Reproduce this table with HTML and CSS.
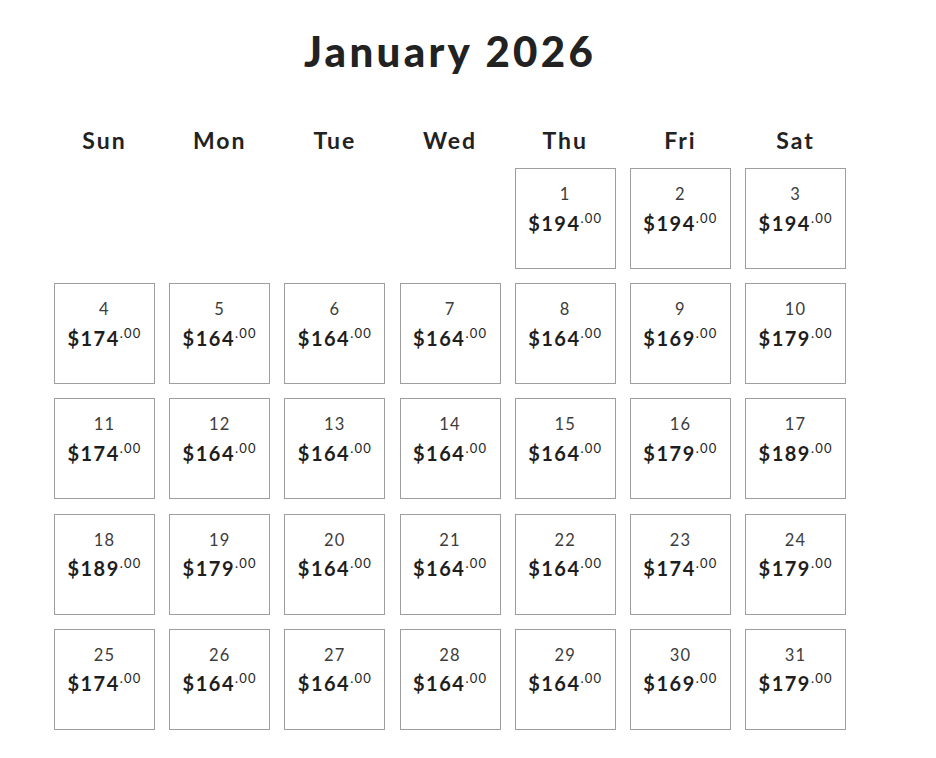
FILE: index.html
```html
<!DOCTYPE html>
<html lang="en">
<head>
<meta charset="utf-8">
<title>January 2026</title>
<link rel="stylesheet" href="styles.css">
</head>
<body>
<div class="calendar">
  <h1 class="title">January 2026</h1>
  <div class="weekdays">
    <div class="wd">Sun</div><div class="wd">Mon</div><div class="wd">Tue</div><div class="wd">Wed</div><div class="wd">Thu</div><div class="wd">Fri</div><div class="wd">Sat</div>
  </div>
  <div class="grid">
    <div class="blank"></div><div class="blank"></div><div class="blank"></div><div class="blank"></div>
    <div class="day"><span class="num">1</span><span class="price">$194<sup>.00</sup></span></div>
    <div class="day"><span class="num">2</span><span class="price">$194<sup>.00</sup></span></div>
    <div class="day"><span class="num">3</span><span class="price">$194<sup>.00</sup></span></div>
    <div class="day"><span class="num">4</span><span class="price">$174<sup>.00</sup></span></div>
    <div class="day"><span class="num">5</span><span class="price">$164<sup>.00</sup></span></div>
    <div class="day"><span class="num">6</span><span class="price">$164<sup>.00</sup></span></div>
    <div class="day"><span class="num">7</span><span class="price">$164<sup>.00</sup></span></div>
    <div class="day"><span class="num">8</span><span class="price">$164<sup>.00</sup></span></div>
    <div class="day"><span class="num">9</span><span class="price">$169<sup>.00</sup></span></div>
    <div class="day"><span class="num">10</span><span class="price">$179<sup>.00</sup></span></div>
    <div class="day"><span class="num">11</span><span class="price">$174<sup>.00</sup></span></div>
    <div class="day"><span class="num">12</span><span class="price">$164<sup>.00</sup></span></div>
    <div class="day"><span class="num">13</span><span class="price">$164<sup>.00</sup></span></div>
    <div class="day"><span class="num">14</span><span class="price">$164<sup>.00</sup></span></div>
    <div class="day"><span class="num">15</span><span class="price">$164<sup>.00</sup></span></div>
    <div class="day"><span class="num">16</span><span class="price">$179<sup>.00</sup></span></div>
    <div class="day"><span class="num">17</span><span class="price">$189<sup>.00</sup></span></div>
    <div class="day"><span class="num">18</span><span class="price">$189<sup>.00</sup></span></div>
    <div class="day"><span class="num">19</span><span class="price">$179<sup>.00</sup></span></div>
    <div class="day"><span class="num">20</span><span class="price">$164<sup>.00</sup></span></div>
    <div class="day"><span class="num">21</span><span class="price">$164<sup>.00</sup></span></div>
    <div class="day"><span class="num">22</span><span class="price">$164<sup>.00</sup></span></div>
    <div class="day"><span class="num">23</span><span class="price">$174<sup>.00</sup></span></div>
    <div class="day"><span class="num">24</span><span class="price">$179<sup>.00</sup></span></div>
    <div class="day"><span class="num">25</span><span class="price">$174<sup>.00</sup></span></div>
    <div class="day"><span class="num">26</span><span class="price">$164<sup>.00</sup></span></div>
    <div class="day"><span class="num">27</span><span class="price">$164<sup>.00</sup></span></div>
    <div class="day"><span class="num">28</span><span class="price">$164<sup>.00</sup></span></div>
    <div class="day"><span class="num">29</span><span class="price">$164<sup>.00</sup></span></div>
    <div class="day"><span class="num">30</span><span class="price">$169<sup>.00</sup></span></div>
    <div class="day"><span class="num">31</span><span class="price">$179<sup>.00</sup></span></div>
  </div>
</div>
</body>
</html>
```

FILE: styles.css
```css
html, body {
  margin: 0;
  padding: 0;
  background: #ffffff;
}
body {
  font-family: Lato, "Noto Sans", sans-serif;
  color: #222222;
}
.calendar {
  width: 792px;
  margin-left: 54px;
  padding-top: 27px;
}
.title {
  margin: 0;
  text-align: center;
  font-size: 42px;
  line-height: 48px;
  font-weight: 900;
  letter-spacing: 3.3px;
  color: #222222;
}
.weekdays {
  display: grid;
  grid-template-columns: repeat(7, 101px);
  column-gap: 14.2px;
  margin-top: 51px;
}
.wd {
  text-align: center;
  font-size: 23px;
  line-height: 28px;
  font-weight: 700;
  letter-spacing: 2px;
  color: #222222;
}
.grid {
  display: grid;
  grid-template-columns: repeat(7, 101px);
  grid-auto-rows: 101px;
  gap: 14.2px;
  margin-top: 14px;
}
.day {
  box-sizing: border-box;
  border: 1px solid #9e9e9e;
  display: flex;
  flex-direction: column;
  align-items: center;
  padding-top: 15px;
}
.num {
  font-size: 16.5px;
  line-height: 20px;
  font-weight: 400;
  color: #3c3c3c;
  letter-spacing: 1.2px;
}
.price {
  margin-top: 6.5px;
  font-size: 20px;
  line-height: 24px;
  font-weight: 700;
  color: #1e1e1e;
  letter-spacing: 1.5px;
}
.price sup {
  font-size: 13px;
  font-weight: 400;
  color: #1e1e1e;
  vertical-align: 0;
  position: relative;
  top: -8px;
  line-height: 0;
  letter-spacing: 1.2px;
}
```
